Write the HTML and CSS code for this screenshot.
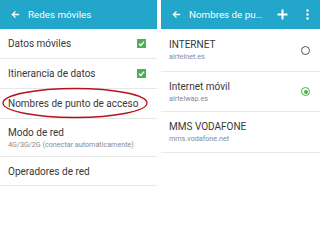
FILE: index.html
```html
<!DOCTYPE html>
<html lang="es">
<head>
  <meta charset="UTF-8" />
  <title>Redes móviles</title>
  <link rel="stylesheet" href="styles.css">
</head>
<body>
  <div class="screens">
    <div class="screen">
      <div class="topbar">
        <svg class="back" width="9" height="9" viewBox="0 0 10 10"><path d="M9 5H1.5M5 1.5L1.5 5L5 8.5" fill="none" stroke="#fff" stroke-width="1.4"/></svg>
        <span class="title">Redes móviles</span>
      </div>
      <div class="row r1">
        <span class="label">Datos móviles</span>
        <span class="check"><svg width="9" height="9" viewBox="0 0 10 10"><path d="M2.2 5.2L4.2 7.2L7.9 3" fill="none" stroke="#fff" stroke-width="1.4"/></svg></span>
      </div>
      <div class="row r1">
        <span class="label">Itinerancia de datos</span>
        <span class="check"><svg width="9" height="9" viewBox="0 0 10 10"><path d="M2.2 5.2L4.2 7.2L7.9 3" fill="none" stroke="#fff" stroke-width="1.4"/></svg></span>
      </div>
      <div class="row r1 marked">
        <span class="label">Nombres de punto de acceso</span>
        <svg class="ring" width="148" height="32" viewBox="0 0 148 32"><ellipse cx="74" cy="16" rx="72" ry="14.5" fill="none" stroke="#b5121b" stroke-width="1.3"/></svg>
      </div>
      <div class="row r2">
        <div>
          <div class="label">Modo de red</div>
          <div class="sub">4G/3G/2G (conectar automáticamente)</div>
        </div>
      </div>
      <div class="row r3">
        <span class="label">Operadores de red</span>
      </div>
    </div>

    <div class="screen">
      <div class="topbar">
        <svg class="back" width="9" height="9" viewBox="0 0 10 10"><path d="M9 5H1.5M5 1.5L1.5 5L5 8.5" fill="none" stroke="#fff" stroke-width="1.4"/></svg>
        <span class="title">Nombres de pu…</span>
        <svg class="plus" width="11" height="11" viewBox="0 0 11 11"><path d="M5.5 0.5V10.5M0.5 5.5H10.5" stroke="#fff" stroke-width="2"/></svg>
        <svg class="more" width="3" height="11" viewBox="0 0 3 11"><circle cx="1.5" cy="1.5" r="1.2" fill="#fff"/><circle cx="1.5" cy="5.5" r="1.2" fill="#fff"/><circle cx="1.5" cy="9.5" r="1.2" fill="#fff"/></svg>
      </div>
      <div class="row apn a1">
        <div>
          <div class="label">INTERNET</div>
          <div class="sub">airtelnet.es</div>
        </div>
        <span class="radio"></span>
      </div>
      <div class="row apn a2">
        <div>
          <div class="label">Internet móvil</div>
          <div class="sub">airtelwap.es</div>
        </div>
        <span class="radio on"></span>
      </div>
      <div class="row apn a3">
        <div>
          <div class="label">MMS VODAFONE</div>
          <div class="sub">mms.vodafone.net</div>
        </div>
      </div>
    </div>
  </div>
</body>
</html>
```

FILE: styles.css
```css
body {
  margin: 0;
  background: #fff;
  font-family: Roboto, "Liberation Sans", sans-serif;
  color: #2b2b2b;
}

.screens {
  display: grid;
  grid-template-columns: 157px 159px;
  gap: 4px;
  width: 320px;
  height: 252px;
}

.topbar {
  height: 29px;
  background-color: #22a6c9;
  display: flex;
  align-items: center;
  color: #fff;
  padding: 0 10px 0 11px;
  white-space: nowrap;
}

.back {
  margin-right: 8px;
}

.title {
  font-size: 9.8px;
  flex: 1;
}

.plus {
  margin-right: 18px;
}

.more {
  margin-right: 1px;
}

.row {
  display: flex;
  align-items: center;
  justify-content: space-between;
  padding: 0 8px 0 8px;
  border-bottom: 1px solid #e8e8e8;
  position: relative;
  white-space: nowrap;
}

.label {
  font-size: 10px;
  color: #383838;
}

.sub {
  font-size: 7.2px;
  color: #8a8a8a;
  margin-top: 2px;
}

.r1 {
  height: 29px;
}

.r2 {
  height: 37px;
}

.r3 {
  height: 28px;
}

.check {
  width: 9px;
  height: 9px;
  background-color: #4cb050;
  display: flex;
  margin-right: 3px;
}

.ring {
  position: absolute;
  left: 1px;
  top: -2px;
}

.apn {
  padding-left: 8px;
  padding-right: 10px;
}

.a1 {
  height: 42px;
}

.a2 {
  height: 39px;
}

.a3 {
  height: 40px;
}

.radio {
  width: 7px;
  height: 7px;
  border: 1.2px solid #555;
  border-radius: 50%;
  box-sizing: content-box;
  position: relative;
}

.radio.on {
  border-color: #4cb050;
}

.radio.on::after {
  content: "";
  position: absolute;
  left: 1.5px;
  top: 1.5px;
  width: 4px;
  height: 4px;
  border-radius: 50%;
  background: #4cb050;
}
```
